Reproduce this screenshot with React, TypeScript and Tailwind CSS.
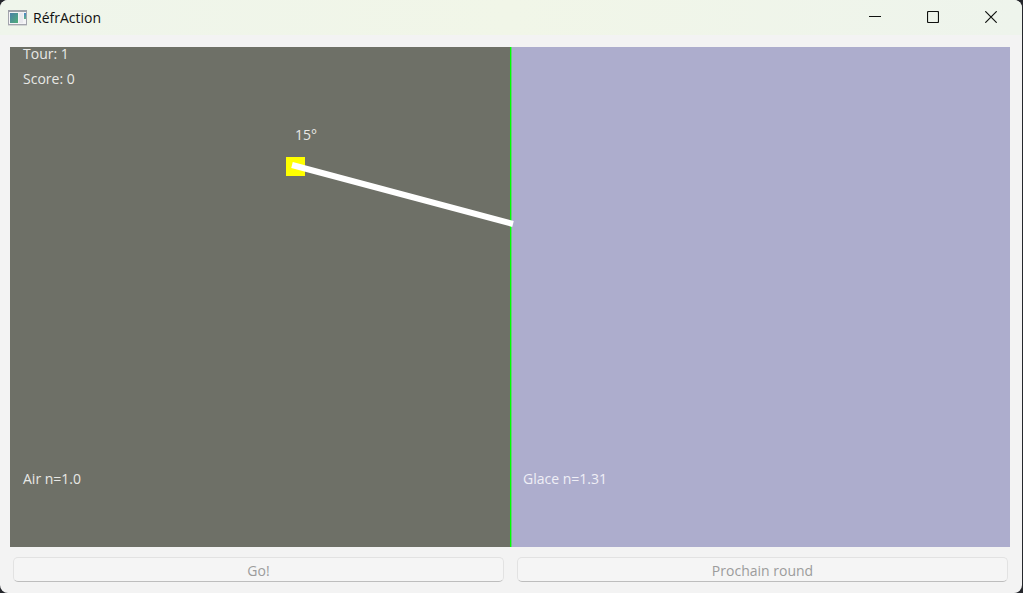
import type { ReactNode } from "react";

function AppIcon() {
  return (
    <svg className="shrink-0" width="19" height="16" viewBox="0 0 19 16" aria-hidden="true">
      <defs>
        <linearGradient id="pane" x1="0" y1="0" x2="1" y2="1">
          <stop offset="0" stopColor="#4a7fa8" />
          <stop offset="1" stopColor="#4fae78" />
        </linearGradient>
        <linearGradient id="bar" x1="0" y1="0" x2="0" y2="1">
          <stop offset="0" stopColor="#4a86c8" />
          <stop offset="1" stopColor="#5fb487" />
        </linearGradient>
      </defs>
      <rect x="0.5" y="0.5" width="18" height="14" fill="#f4f4f6" stroke="#a3a5ad" />
      <path d="M0 1h19" stroke="#9da0a8" strokeWidth="2" />
      <rect x="2" y="3" width="8" height="10" fill="url(#pane)" />
      <rect x="11" y="3" width="4" height="10" fill="#e9e9ee" />
      <rect x="16" y="3" width="2" height="6" fill="url(#bar)" />
      <path d="M0 15.5h19" stroke="#d3d6d4" />
    </svg>
  );
}

function CaptionButton({ label, children }: { label: string; children: ReactNode }) {
  return (
    <button type="button" aria-label={label} className="flex h-full w-[58px] items-center justify-center hover:bg-black/5">
      <svg width="12" height="12" viewBox="0 0 12 12" fill="none" stroke="#101210" aria-hidden="true">
        {children}
      </svg>
    </button>
  );
}

function TitleBar() {
  return (
    <header className="flex h-[35px] items-center bg-linear-to-r from-[#eff5eb] via-[#f1f6e8] to-[#eef4ec] pl-2">
      <AppIcon />
      <h1 className="ml-1.5 flex-1 text-sm text-[#101010]">RéfrAction</h1>
      <div className="flex h-full pr-0.5 pb-px">
        <CaptionButton label="Réduire">
          <path d="M0 5.5h12" />
        </CaptionButton>
        <CaptionButton label="Agrandir">
          <rect x="0.5" y="0.5" width="11" height="11" rx="1" strokeWidth="1.2" />
        </CaptionButton>
        <CaptionButton label="Fermer">
          <path d="M0.3 0.3l11.4 11.4M11.7 0.3L0.3 11.7" strokeWidth="1.2" />
        </CaptionButton>
      </div>
    </header>
  );
}

function Scene() {
  return (
    <section className="relative grid aspect-[2/1] grid-cols-2 text-sm leading-[25px] text-[#e8e8e5]">
      <div className="flex flex-col justify-between bg-[#6e7067] px-[13px] pb-14">
        <div className="-mt-1.5">
          <p>Tour: 1</p>
          <p>Score: 0</p>
        </div>
        <p>Air n=1.0</p>
      </div>
      <div className="flex flex-col justify-end bg-[#adadcd] px-[13px] pb-14 text-[#efeff6]">
        <p>Glace n=1.31</p>
      </div>
      <svg className="absolute inset-0 size-full" viewBox="0 0 1000 500" aria-hidden="true">
        <rect x="500" y="0" width="1.4" height="500" fill="#00ff00" />
        <rect x="276" y="110" width="19" height="19" fill="#ffff00" />
        <path d="M282 118L503 177" stroke="#ffffff" strokeWidth="6" />
      </svg>
      <span className="absolute top-[15%] left-[28.5%]">15°</span>
    </section>
  );
}

function ActionButton({ children }: { children: ReactNode }) {
  return (
    <button
      type="button"
      disabled
      className="h-[25px] flex-1 rounded-[5px] border border-[#e2e2e2] border-b-[#bdbdbd] bg-[#f5f5f5] pt-0.5 text-sm text-[#9c9c9c]"
    >
      {children}
    </button>
  );
}

export default function App() {
  return (
    <div className="min-h-screen bg-[#25272c] pr-px font-['Open_Sans','Noto_Sans',sans-serif]">
      <div className="min-h-screen overflow-hidden rounded-lg bg-[#f3f3f3]">
        <TitleBar />
        <main className="px-2.5 pt-3 pr-3">
          <Scene />
          <div className="flex gap-[13px] pt-2.5 pr-0.5 pb-2.5 pl-[3px]">
            <ActionButton>Go!</ActionButton>
            <ActionButton>Prochain round</ActionButton>
          </div>
        </main>
      </div>
    </div>
  );
}
